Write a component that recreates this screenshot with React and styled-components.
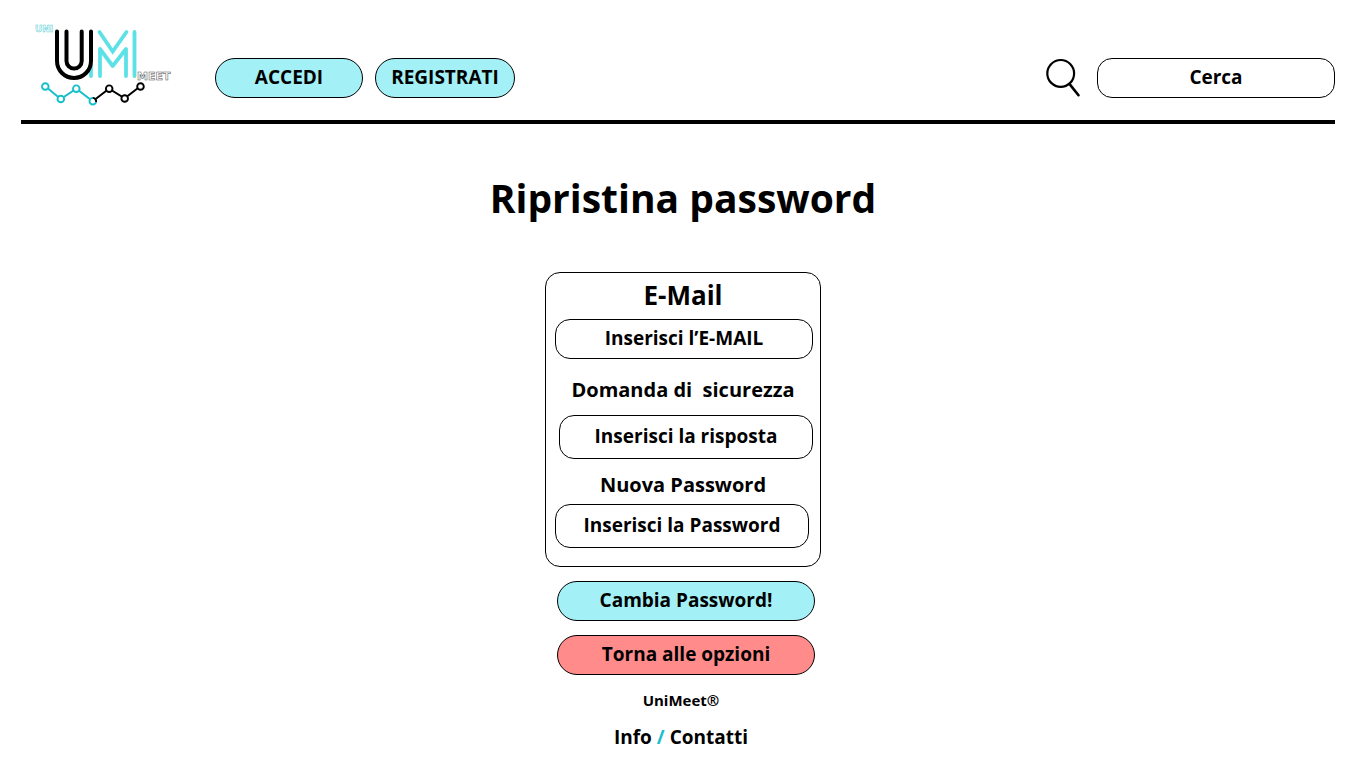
import React from "react";
import styled, { createGlobalStyle } from "styled-components";

const GlobalStyle = createGlobalStyle`
  *, *::before, *::after { box-sizing: border-box; }
  body {
    margin: 0;
    background: #fff;
    color: #000;
    font-family: "Open Sans", "Noto Sans", sans-serif;
    font-weight: 700;
  }
`;

const Header = styled.header`
  display: flex;
  align-items: flex-start;
  margin: 0 31px 0 21px;
  height: 124px;
  padding-top: 20px;
  border-bottom: 4px solid #000;
`;

const LogoLink = styled.a`
  display: block;
  margin-left: 9px;
  width: 150px;
  height: 90px;
`;

const Nav = styled.nav`
  display: flex;
  gap: 12px;
  margin: 38px 0 0 35px;
`;

const Search = styled.form`
  display: flex;
  align-items: center;
  gap: 16px;
  margin: 38px 0 0 auto;
`;

const Button = styled.button`
  width: ${(p) => p.$width || "100%"};
  height: 40px;
  padding: 0 0 2px;
  border: 1px solid #000;
  border-radius: 20px;
  background: ${(p) => (p.$danger ? "#ff8b8b" : "#a3f0f6")};
  color: #000;
  font: 700 19px/26px "Open Sans", "Noto Sans", sans-serif;
  cursor: pointer;
`;

const Input = styled.input`
  align-self: ${(p) => p.$align || "auto"};
  width: ${(p) => p.$width || "100%"};
  height: ${(p) => (p.$tall ? "44px" : "40px")};
  padding: 0 8px 2px;
  border: 1px solid #000;
  border-radius: 15px;
  background: #fff;
  color: #000;
  font: 700 19px/26px "Open Sans", "Noto Sans", sans-serif;
  text-align: center;
  &::placeholder {
    color: #000;
    opacity: 1;
  }
  &::-webkit-search-cancel-button {
    display: none;
  }
`;

const Main = styled.main`
  display: flex;
  flex-direction: column;
  align-items: center;
`;

const Title = styled.h1`
  margin: 46px 0 46px;
  font-size: 39px;
  line-height: 56px;
`;

const Form = styled.form`
  width: 276px;
`;

const Card = styled.div`
  display: flex;
  flex-direction: column;
  height: 295px;
  padding: 5px 7px 0 9px;
  border: 1px solid #000;
  border-radius: 15px;
`;

const Label = styled.label`
  display: block;
  padding-right: 2px;
  text-align: center;
  white-space: pre;
  font-size: ${(p) => (p.$large ? "26px" : "20px")};
  line-height: ${(p) => (p.$large ? "34px" : "28px")};
  margin: ${(p) => p.$margin};
`;

const Actions = styled.div`
  display: flex;
  flex-direction: column;
  gap: 14px;
  padding: 14px 6px 0 12px;
`;

const Footer = styled.footer`
  padding: 14px 4px 0 0;
  text-align: center;
`;

const Brand = styled.p`
  margin: 0;
  font-size: 15px;
  line-height: 22px;
`;

const Links = styled.p`
  margin: 13px 0 0;
  font-size: 19px;
  line-height: 26px;
  span { color: #17bfca; }
`;

const FooterLink = styled.a`
  color: #000;
  text-decoration: none;
`;

function Logo() {
  return (
    <svg width="150" height="90" viewBox="30 20 150 90" fill="none" role="img" aria-label="UniMeet">
      <g stroke="#5ce1e6" strokeWidth="3.8" strokeLinecap="round" strokeLinejoin="round">
        <path d="M91 66V76" />
        <path d="M99.5 32L112.7 51.5L126.5 32" strokeLinejoin="miter" />
        <path d="M100 76V49L112.7 66L126 49V76" />
        <path d="M134.5 32V76" />
      </g>
      <g stroke="#000" strokeWidth="4" strokeLinecap="round">
        <path d="M57 31.5V61A17 17 0 0 0 91 61V31.5" />
        <path d="M66.5 31.5V61A7.6 7.6 0 0 0 81.7 61V31.5" />
      </g>
      <g fontFamily="DejaVu Sans" fontWeight="700" fill="#fff" strokeWidth="0.5" opacity="0.8">
        <text x="35" y="32" fontSize="9" stroke="#17bfca">UNI</text>
        <text x="137" y="80" fontSize="11" stroke="#222">MEET</text>
      </g>
      <g strokeWidth="1.9" fill="#fff">
        <g stroke="#000">
          <path d="M92.7 101.3L109 88.7L124.7 98.3L140.3 86.3" fill="none" />
          <circle cx="109.2" cy="88.7" r="3.3" />
          <circle cx="124.7" cy="98.5" r="3.3" />
          <circle cx="140.5" cy="86.5" r="3.3" />
        </g>
        <g stroke="#17bfca">
          <path d="M45.3 86.3L60.7 99L76.3 88.7L92.7 101.3" fill="none" />
          <circle cx="45.3" cy="86.5" r="3.3" />
          <circle cx="60.8" cy="99" r="3.3" />
          <circle cx="76.3" cy="88.7" r="3.3" />
          <circle cx="92.8" cy="101.2" r="3.3" />
        </g>
        <path d="M92.8 97.9A3.3 3.3 0 0 1 96 102" stroke="#000" fill="none" />
      </g>
    </svg>
  );
}

function SearchIcon() {
  return (
    <svg width="35" height="40" viewBox="1046 58 35 40" fill="none" stroke="#000" aria-hidden="true">
      <circle cx="1060.7" cy="73.4" r="13.4" strokeWidth="2.2" />
      <path d="M1069.8 84.4L1078.5 95.2" strokeWidth="2.6" strokeLinecap="round" />
    </svg>
  );
}

export default function App() {
  return (
    <>
      <GlobalStyle />
      <Header>
        <LogoLink href="#"><Logo /></LogoLink>
        <Nav>
          <Button type="button" $width="148px">ACCEDI</Button>
          <Button type="button" $width="140px">REGISTRATI</Button>
        </Nav>
        <Search role="search">
          <SearchIcon />
          <Input type="search" aria-label="Cerca" placeholder="Cerca" $width="238px" />
        </Search>
      </Header>
      <Main>
        <Title>Ripristina password</Title>
        <Form>
          <Card>
            <Label htmlFor="email" $large $margin="0 0 7px">E-Mail</Label>
            <Input id="email" type="email" placeholder="Inserisci l’E-MAIL" />
            <Label htmlFor="answer" $margin="17px 0 11px">{"Domanda di  sicurezza"}</Label>
            <Input id="answer" type="text" placeholder="Inserisci la risposta" $tall $width="254px" $align="flex-end" />
            <Label htmlFor="password" $margin="12px 0 5px">Nuova Password</Label>
            <Input id="password" type="password" placeholder="Inserisci la Password" $tall $width="254px" $align="flex-start" />
          </Card>
          <Actions>
            <Button type="submit">Cambia Password!</Button>
            <Button type="button" $danger>Torna alle opzioni</Button>
          </Actions>
        </Form>
      </Main>
      <Footer>
        <Brand>UniMeet®</Brand>
        <Links>
          <FooterLink href="#info">Info</FooterLink> <span>/</span> <FooterLink href="#contatti">Contatti</FooterLink>
        </Links>
      </Footer>
    </>
  );
}
